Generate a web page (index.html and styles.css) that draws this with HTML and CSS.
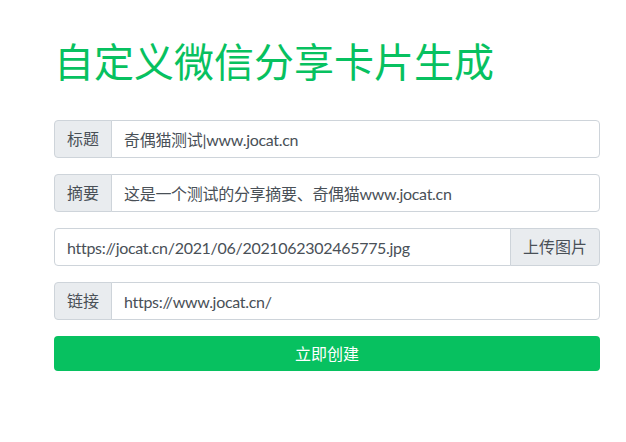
FILE: index.html
```html
<!DOCTYPE html>
<html lang="zh-CN">
<head>
<meta charset="utf-8">
<title>自定义微信分享卡片生成</title>
<link rel="stylesheet" href="styles.css">
</head>
<body>
<div class="container">
  <h1 class="title">自定义微信分享卡片生成</h1>
  <div class="input-group">
    <span class="addon addon-prepend">标题</span>
    <input class="field field-after" type="text" value="奇偶猫测试|www.jocat.cn">
  </div>
  <div class="input-group">
    <span class="addon addon-prepend">摘要</span>
    <input class="field field-after" type="text" value="这是一个测试的分享摘要、奇偶猫www.jocat.cn">
  </div>
  <div class="input-group">
    <input class="field field-before" type="text" value="https://jocat.cn/2021/06/2021062302465775.jpg">
    <span class="addon addon-append">上传图片</span>
  </div>
  <div class="input-group">
    <span class="addon addon-prepend">链接</span>
    <input class="field field-after" type="text" value="https://www.jocat.cn/">
  </div>
  <button class="btn-create" type="button">立即创建</button>
</div>
</body>
</html>
```

FILE: styles.css
```css
* { box-sizing: border-box; }
html, body { margin: 0; padding: 0; background: #fff; }
body {
  font-family: "Lato", "Noto Sans CJK SC", sans-serif;
  font-size: 16px;
  line-height: 1.5;
  color: #212529;
}
.container {
  width: 546px;
  margin-left: 54px;
  padding-top: 36px;
}
.title {
  margin: 0 0 36px 0;
  font-size: 40px;
  font-weight: 400;
  line-height: 1.2;
  color: #07c160;
  font-family: "Noto Sans CJK SC", sans-serif;
}
.input-group {
  display: flex;
  height: 38px;
  margin-bottom: 16px;
}
.addon {
  display: flex;
  align-items: center;
  padding: 0 12px;
  background: #e9ecef;
  border: 1px solid #ced4da;
  color: #495057;
  font-size: 16px;
  white-space: nowrap;
}
.addon-prepend { border-radius: 4px 0 0 4px; }
.addon-append { border-radius: 0 4px 4px 0; margin-left: -1px; }
.field {
  flex: 1;
  min-width: 0;
  height: 38px;
  padding: 0 12px;
  border: 1px solid #ced4da;
  background: #fff;
  color: #495057;
  font: inherit;
  font-size: 16px;
  letter-spacing: -0.3px;
  outline: none;
}
.field-after { border-radius: 0 4px 4px 0; margin-left: -1px; }
.field-before { border-radius: 4px 0 0 4px; }
.btn-create {
  display: block;
  width: 100%;
  height: 35px;
  padding: 0;
  border: 0;
  border-radius: 4px;
  background: #07c160;
  color: #fff;
  font: inherit;
  font-size: 16px;
  cursor: pointer;
}
```
